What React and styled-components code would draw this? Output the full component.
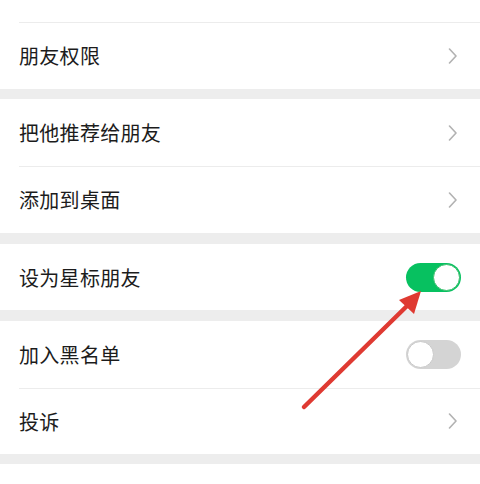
import React from "react";
import styled, { createGlobalStyle } from "styled-components";

const Global = createGlobalStyle`
  html, body { margin: 0; padding: 0; background: #ffffff; }
  body { font-family: "Noto Sans CJK SC", "Noto Sans", sans-serif; }
`;

const Page = styled.div`
  position: relative;
  width: 480px;
  height: 484px;
  overflow: hidden;
  background: #ffffff;
  display: flex;
  flex-direction: column;
`;

const Group = styled.div`
  background: #ffffff;
  display: flex;
  flex-direction: column;
`;

const Stub = styled.div`
  height: 22px;
`;

const Band = styled.div`
  height: ${(p) => p.h}px;
  background: #ededed;
  flex-shrink: 0;
`;

const Row = styled.div`
  position: relative;
  height: ${(p) => p.h || 67}px;
  box-sizing: border-box;
  padding: 0 19px;
  display: flex;
  align-items: center;
  justify-content: space-between;
  ${(p) =>
    p.divider &&
    `
    &::before {
      content: "";
      position: absolute;
      top: 0;
      left: 19px;
      right: 0;
      height: 1px;
      background: #ececec;
    }
  `}
`;

const Label = styled.span`
  font-size: 20px;
  color: #1c1c1c;
  letter-spacing: 0.3px;
`;

const Chevron = styled.svg`
  width: 10px;
  height: 16px;
  margin-right: 3px;
`;

const Toggle = styled.div`
  width: 55px;
  height: 29px;
  border-radius: 15px;
  box-sizing: border-box;
  background: ${(p) => (p.on ? "#07c160" : "#d4d4d4")};
  display: flex;
  align-items: center;
  justify-content: ${(p) => (p.on ? "flex-end" : "flex-start")};
  padding: 0 1px;
`;

const Knob = styled.div`
  width: 27px;
  height: 27px;
  border-radius: 50%;
  background: #ffffff;
  box-sizing: border-box;
  border: 1.5px solid ${(p) => (p.on ? "#3cbf6e" : "#c9c9c9")};
`;

const Arrow = styled.svg`
  position: absolute;
  left: 0;
  top: 0;
  width: 480px;
  height: 484px;
  pointer-events: none;
`;

function ChevronIcon() {
  return (
    <Chevron viewBox="0 0 10 16">
      <polyline
        points="1.5,1 8,8 1.5,15"
        fill="none"
        stroke="#b2b2b2"
        strokeWidth="1.6"
        strokeLinecap="round"
        strokeLinejoin="round"
      />
    </Chevron>
  );
}

function Switch({ on }) {
  return (
    <Toggle on={on}>
      <Knob on={on} />
    </Toggle>
  );
}

export default function App() {
  return (
    <>
      <Global />
      <Page>
        <Group>
          <Stub />
          <Row divider>
            <Label>朋友权限</Label>
            <ChevronIcon />
          </Row>
        </Group>
        <Band h={10} />
        <Group>
          <Row>
            <Label>把他推荐给朋友</Label>
            <ChevronIcon />
          </Row>
          <Row divider>
            <Label>添加到桌面</Label>
            <ChevronIcon />
          </Row>
        </Group>
        <Band h={11} />
        <Group>
          <Row h={66}>
            <Label>设为星标朋友</Label>
            <Switch on />
          </Row>
        </Group>
        <Band h={11} />
        <Group>
          <Row>
            <Label>加入黑名单</Label>
            <Switch on={false} />
          </Row>
          <Row divider h={66}>
            <Label>投诉</Label>
            <ChevronIcon />
          </Row>
        </Group>
        <Band h={10} />
        <Arrow viewBox="0 0 480 484">
          <line
            x1="304"
            y1="407"
            x2="409"
            y2="304"
            stroke="#df3a32"
            strokeWidth="4.5"
            strokeLinecap="round"
          />
          <polygon points="421,291 399,300 414,314" fill="#df3a32" />
        </Arrow>
      </Page>
    </>
  );
}
